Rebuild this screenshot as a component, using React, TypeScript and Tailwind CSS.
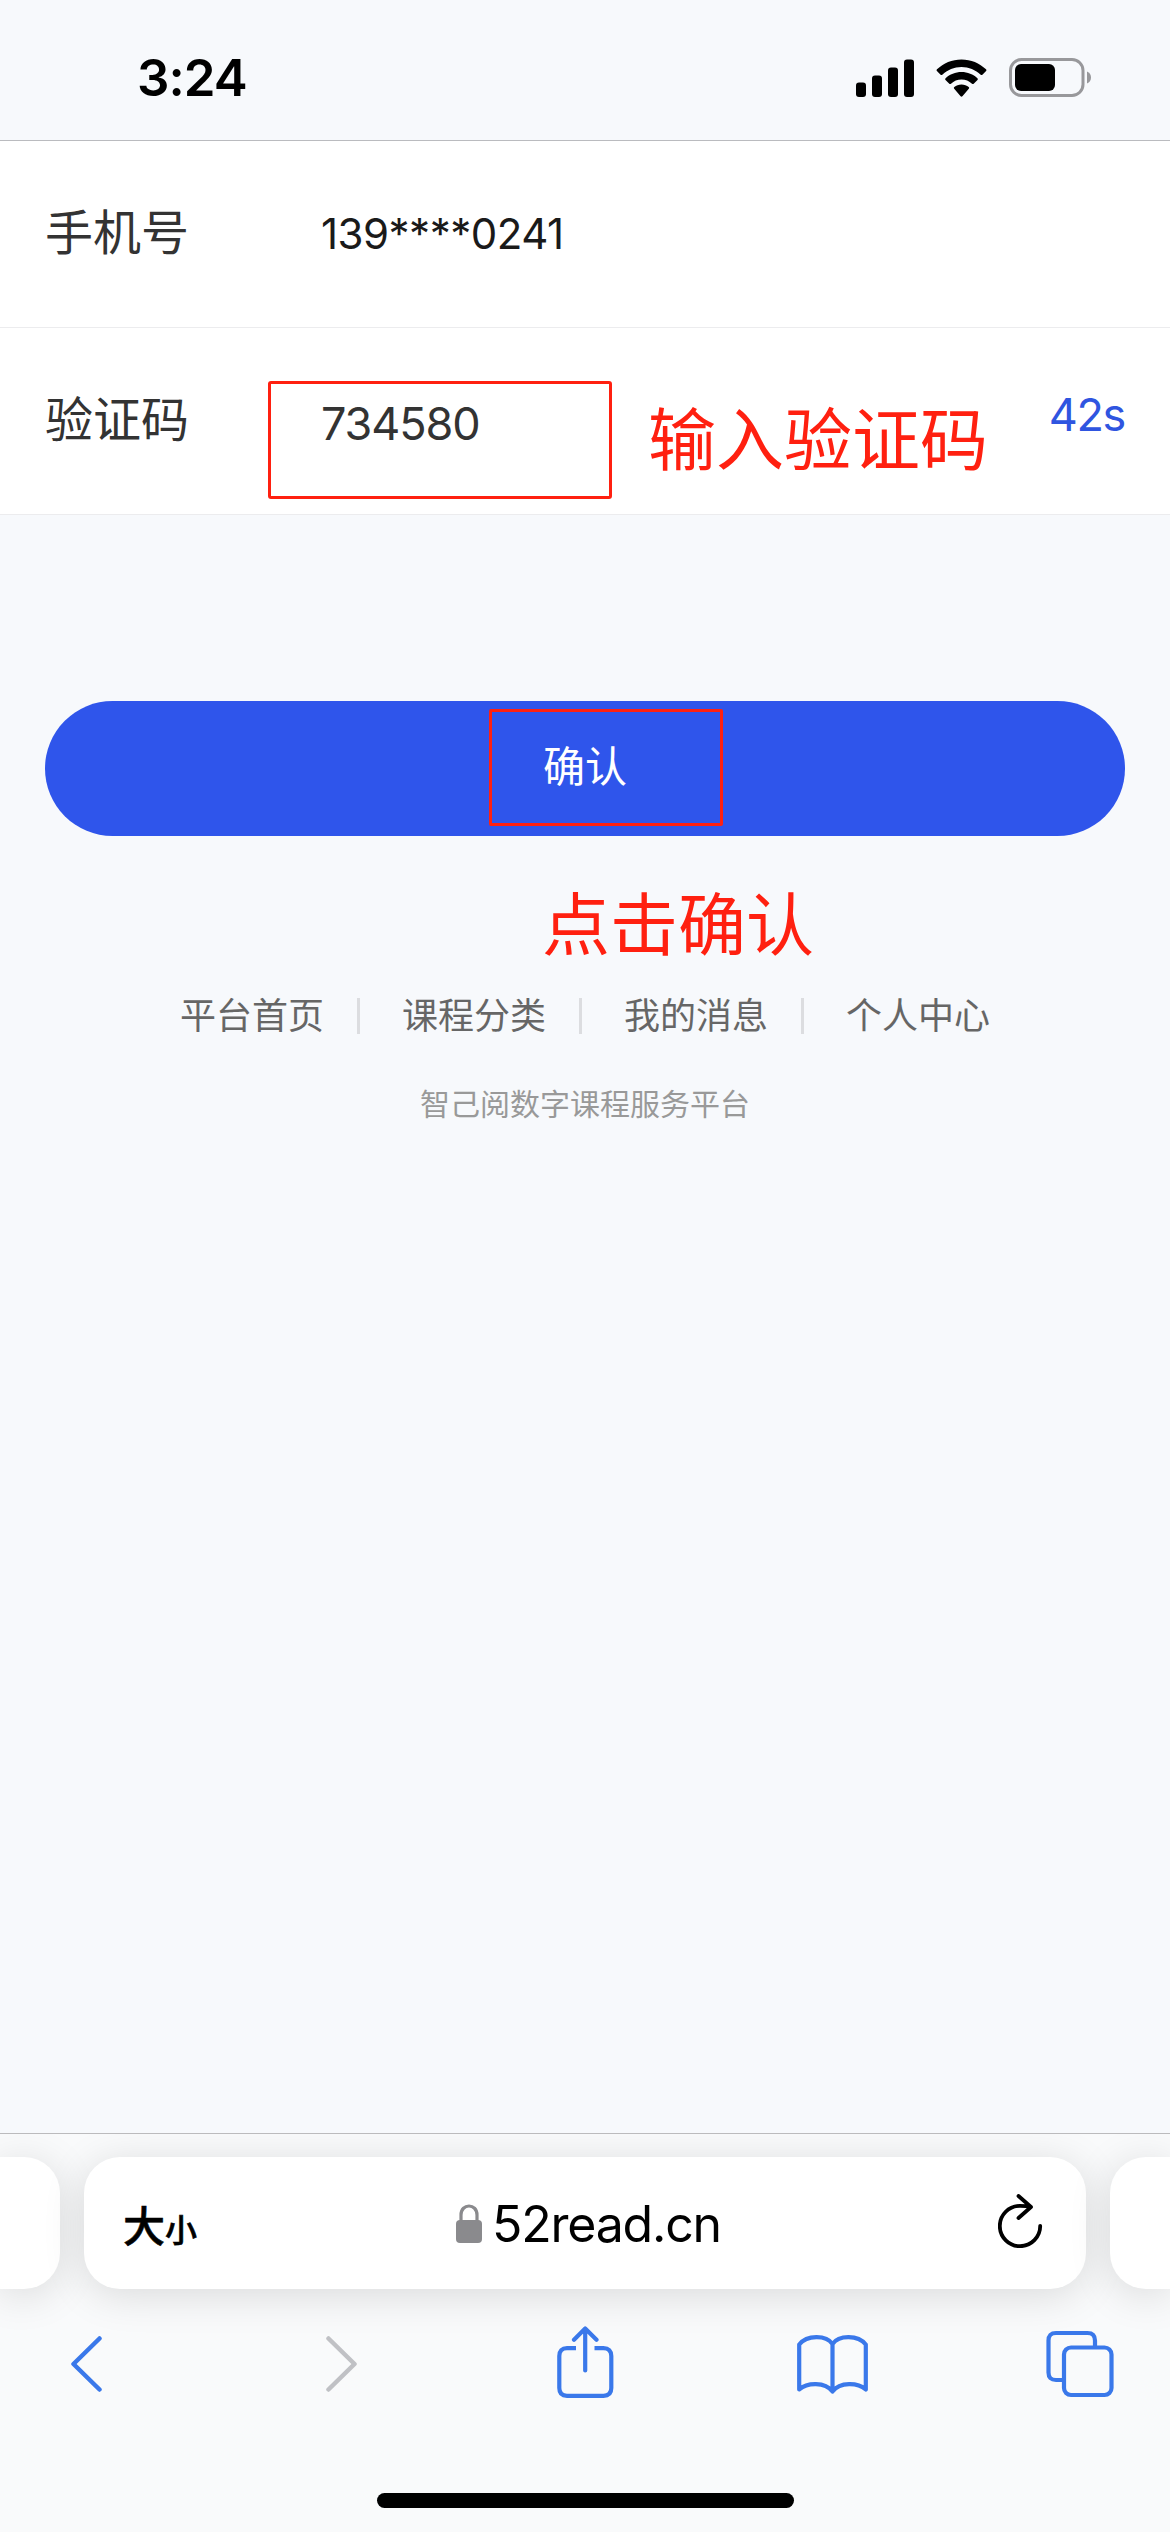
import { ReactNode } from "react"

const links = ["平台首页", "课程分类", "我的消息", "个人中心"]

function StatusBar() {
  return (
    <header className="flex h-[141px] items-start justify-between border-b border-[#babbbf] pt-[50px] pr-[78px] pl-[137px]">
      <span className="text-[51px] leading-[56px] font-semibold tracking-[-1px] text-black">3:24</span>
      <div className="flex items-center pt-2">
        <svg width="58" height="38" viewBox="0 0 58 38" fill="#000">
          <rect x="0" y="23.5" width="10" height="14.5" rx="3" />
          <rect x="16" y="16.5" width="10" height="21.5" rx="3" />
          <rect x="32" y="8.5" width="10" height="29.5" rx="3" />
          <rect x="48" y="0.5" width="10" height="37.5" rx="3" />
        </svg>
        <svg className="ml-[22px]" width="51" height="38" viewBox="0 0 51 38" fill="#000">
          <path d="M25.5 0.5C35 0.5 43.5 4.2 50 10.3C50.6 10.9 50.6 11.5 50.1 12L46.4 15.7C45.9 16.2 45.3 16.2 44.7 15.7C39.5 10.9 32.8 8 25.5 8S11.5 10.9 6.3 15.7C5.7 16.2 5.1 16.2 4.6 15.7L0.9 12C0.4 11.5 0.4 10.9 1 10.3C7.5 4.2 16 0.5 25.5 0.5Z" />
          <path d="M25.5 13C31.6 13 37.2 15.3 41.4 19.2C42 19.8 42 20.4 41.5 20.9L37.7 24.7C37.2 25.2 36.6 25.2 36 24.7C33.2 22.2 29.5 20.6 25.5 20.6S17.8 22.2 15 24.7C14.4 25.2 13.8 25.2 13.3 24.7L9.5 20.9C9 20.4 9 19.8 9.6 19.2C13.8 15.3 19.4 13 25.5 13Z" />
          <path d="M25.5 25.4C28.3 25.4 30.8 26.4 32.7 28.1C33.3 28.6 33.3 29.2 32.8 29.7L26.4 37.2C25.8 37.8 25.2 37.8 24.6 37.2L18.2 29.7C17.7 29.2 17.7 28.6 18.3 28.1C20.2 26.4 22.7 25.4 25.5 25.4Z" />
        </svg>
        <svg className="ml-[22px]" width="83" height="39" viewBox="0 0 83 39" fill="none">
          <rect x="1.5" y="1.5" width="72.5" height="36" rx="11" stroke="#98989b" strokeWidth="3" />
          <rect x="6" y="6" width="40" height="27" rx="6" fill="#000" />
          <path d="M78 13.5C80.5 14.5 82 16.8 82 19.5S80.5 24.5 78 25.5Z" fill="#98989b" />
        </svg>
      </div>
    </header>
  )
}

function Row({ label, children }: { label: string; children: ReactNode }) {
  return (
    <div className="relative flex h-[187px] items-start border-b border-[#ececee] bg-white px-[45px] pt-[56px]">
      <span className="w-[276px] text-[48px] leading-[72px] text-[#333]">{label}</span>
      {children}
    </div>
  )
}

function Toolbar() {
  return (
    <nav className="flex h-[80px] items-center pl-[70px]">
      <svg width="33" height="56" viewBox="0 0 33 56" fill="none" stroke="#3a78ea" strokeWidth="4.5" strokeLinecap="round" strokeLinejoin="round">
        <path d="M29.5 2.5L3.5 28L29.5 53.5" />
      </svg>
      <svg className="ml-[222px]" width="33" height="56" viewBox="0 0 33 56" fill="none" stroke="#c0c1c5" strokeWidth="4.5" strokeLinecap="round" strokeLinejoin="round">
        <path d="M3.5 2.5L29.5 28L3.5 53.5" />
      </svg>
      <svg className="ml-[199px]" width="57" height="76" viewBox="0 0 57 76" fill="none" stroke="#3a78ea" strokeWidth="4.2">
        <path d="M19 22.2H10Q2.3 22.2 2.3 30V62Q2.3 69.8 10 69.8H46.5Q54.3 69.8 54.3 62V30Q54.3 22.2 46.5 22.2H37.5" />
        <path d="M28.2 44.5V3M17 13.7L28.2 2.5L39.5 13.7" strokeLinecap="round" strokeLinejoin="round" />
      </svg>
      <svg className="ml-[183px]" width="73" height="60" viewBox="0 0 73 60" fill="none" stroke="#3a78ea" strokeWidth="4.2" strokeLinecap="round" strokeLinejoin="round">
        <path d="M35.5 10C29 0.8 10 0.8 2.2 10.5V55.5C10 48.5 28 47.5 35.5 57.5C43 47.5 61 48.5 68.8 55.5V10.5C61 0.8 42 0.8 35.5 10ZM35.5 10V56" />
      </svg>
      <svg className="ml-[176px]" width="68" height="68" viewBox="0 0 68 68" fill="none" stroke="#3a78ea" strokeWidth="4.2">
        <path d="M16 50H10Q2.5 50 2.5 42.5V10.5Q2.5 3 10 3H41.5Q49 3 49 10.5V17" />
        <rect x="18" y="17.5" width="47.5" height="47.5" rx="7" />
      </svg>
    </nav>
  )
}

function BrowserBar() {
  return (
    <footer className="h-[399px] overflow-hidden border-t border-[#bbbbbd] bg-[#f9fafb]">
      <div className="mt-[23px] flex h-[132px] gap-6">
        <div className="w-[60px] rounded-r-[36px] bg-white shadow-[0_6px_42px_rgba(0,0,0,0.13)]" />
        <div className="flex w-[1002px] items-center rounded-[36px] bg-white pr-[42px] pl-[39px] text-black shadow-[0_6px_42px_rgba(0,0,0,0.13)]">
          <div className="flex w-[333px] items-baseline font-['Noto_Sans_CJK_SC',sans-serif] font-medium">
            <span className="text-[42px] [-webkit-text-stroke:0.6px_#000]">大</span>
            <span className="text-[32px] [-webkit-text-stroke:0.6px_#000]">小</span>
          </div>
          <svg width="26" height="39" viewBox="0 0 26 39" fill="none">
            <path d="M5 19V11C5 -1 21 -1 21 11V19" stroke="#8a8a8d" strokeWidth="3.2" />
            <rect y="16" width="26" height="23" rx="4" fill="#8a8a8d" />
          </svg>
          <span className="mt-[2px] ml-[10px] text-[50px] leading-[60px] tracking-[-1.2px]">52read.cn</span>
          <svg className="-mt-1 ml-auto" width="46" height="54" viewBox="0 0 46 54" fill="none" stroke="#000" strokeWidth="3.8" strokeLinecap="round" strokeLinejoin="round">
            <path d="M42.2 31.8A20.2 20.2 0 1 1 22 11.8Q28 11.8 33 13M20.5 2L33 13L20.5 24" />
          </svg>
        </div>
        <div className="w-[60px] rounded-l-[36px] bg-white shadow-[0_6px_42px_rgba(0,0,0,0.13)]" />
      </div>
      <div className="mt-[35px]">
        <Toolbar />
      </div>
      <div className="mx-auto mt-[89px] h-[15px] w-[417px] rounded-full bg-black" />
    </footer>
  )
}

export default function App() {
  return (
    <div className="flex h-[2532px] w-[1170px] flex-col overflow-hidden bg-[#f7f9fc] font-[Inter,'Noto_Sans_CJK_SC',sans-serif]">
      <StatusBar />
      <main className="flex-1">
        <Row label="手机号">
          <span className="text-[42px] leading-[74px] tracking-[-0.5px] text-[#1a1a1a]">139****0241</span>
        </Row>
        <Row label="验证码">
          <span className="text-[45px] leading-[79px] tracking-[-1.1px] text-[#333]">734580</span>
          <span className="ml-auto text-[45px] leading-[61px] tracking-[-1.3px] text-[#2f55e0]">42s</span>
          {/* callout around the code input */}
          <div className="absolute top-[53px] left-[268px] h-[118px] w-[344px] rounded-[3px] border-[3px] border-[#ff2010]" />
          <div className="absolute top-[62px] left-[648px] text-[68px] leading-[100px] text-[#ff2010]">输入验证码</div>
        </Row>
        <div className="relative mx-[45px] mt-[186px]">
          <button className="block h-[135px] w-full rounded-full bg-[#2f55eb] pb-[4px] text-[42px] leading-[131px] text-white">确认</button>
          <div className="absolute top-[8px] left-[444px] h-[117px] w-[234px] rounded-[2px] border-[3px] border-[#ff2010]" />
          <div className="absolute top-[174px] left-[497px] text-[68px] leading-[100px] text-[#ff2010]">点击确认</div>
        </div>
        <div className="mt-[156px] flex h-[48px] items-center justify-center text-[36px] leading-[48px] text-[#666]">
          {links.map((link, i) => (
            <div key={link} className="flex items-center">
              {i > 0 && <i className="mr-[42px] ml-[33px] h-[36px] w-[3px] bg-[#dcdde0]" />}
              <span>{link}</span>
            </div>
          ))}
        </div>
        <p className="mt-[44px] text-center text-[30px] leading-[40px] text-[#999]">智己阅数字课程服务平台</p>
      </main>
      <BrowserBar />
    </div>
  )
}
